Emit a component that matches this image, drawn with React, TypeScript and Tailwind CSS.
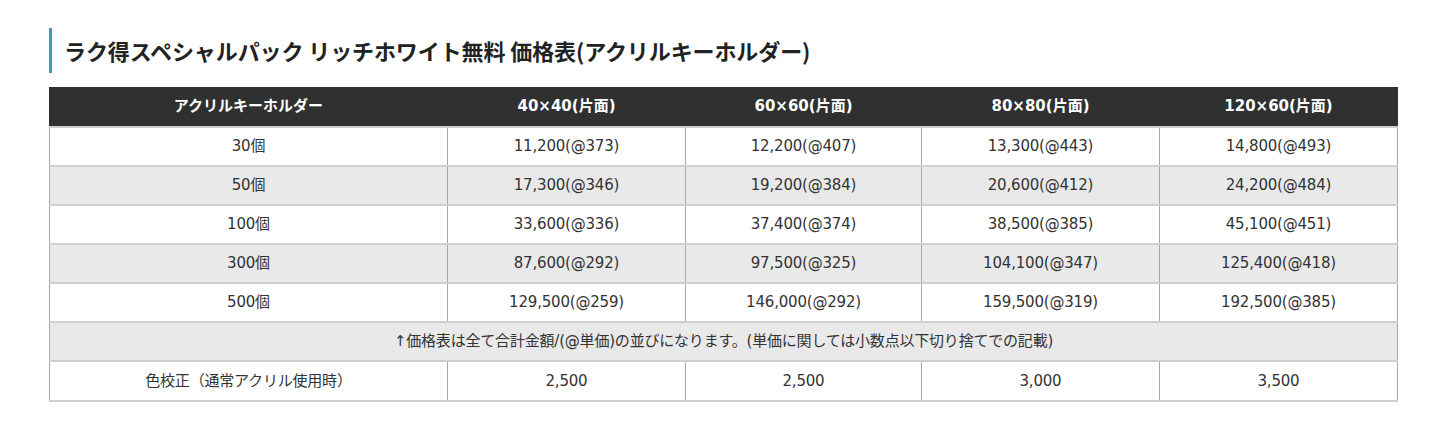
const headers = ['アクリルキーホルダー', '40×40(片面)', '60×60(片面)', '80×80(片面)', '120×60(片面)'];

const rows = [
  ['30個', '11,200(@373)', '12,200(@407)', '13,300(@443)', '14,800(@493)'],
  ['50個', '17,300(@346)', '19,200(@384)', '20,600(@412)', '24,200(@484)'],
  ['100個', '33,600(@336)', '37,400(@374)', '38,500(@385)', '45,100(@451)'],
  ['300個', '87,600(@292)', '97,500(@325)', '104,100(@347)', '125,400(@418)'],
  ['500個', '129,500(@259)', '146,000(@292)', '159,500(@319)', '192,500(@385)'],
];

const titleFont = { fontFamily: '"Noto Sans CJK JP", "Noto Sans", sans-serif' };
const bodyFont = { fontFamily: '"DejaVu Sans", "Noto Sans CJK JP", sans-serif' };

const cell = 'text-center border-x border-x-[#a8a8a8] border-y-2 border-y-[#cfcfcf] p-0 tracking-[-0.2px]';

export default function App() {
  return (
    <div className="bg-white w-[1446px] h-[429px] pt-[28px] pl-[49px]">
      <h2
        className="border-l-[3px] border-[#3a9bbf] pl-[12px] h-[45px] flex items-center text-[22px] font-bold text-[#222] tracking-[-0.1px]"
        style={titleFont}
      >
        ラク得スペシャルパック リッチホワイト無料 価格表(アクリルキーホルダー)
      </h2>
      <table
        className="mt-[14px] w-[1348px] border-collapse table-fixed text-[15px] text-[#333]"
        style={bodyFont}
      >
        <colgroup>
          <col className="w-[398px]" />
          <col className="w-[238px]" />
          <col className="w-[236px]" />
          <col className="w-[238px]" />
          <col className="w-[238px]" />
        </colgroup>
        <thead>
          <tr className="bg-[#2f3030] h-[40px]">
            {headers.map((h) => (
              <th key={h} className="text-white font-bold text-[15px] text-center border-x border-[#2f3030]">
                {h}
              </th>
            ))}
          </tr>
        </thead>
        <tbody>
          {rows.map((r, i) => (
            <tr key={r[0]} className={`h-[39px] ${i % 2 === 1 ? 'bg-[#e9e9e9]' : 'bg-white'}`}>
              {r.map((c, j) => (
                <td key={j} className={cell}>
                  {c}
                </td>
              ))}
            </tr>
          ))}
          <tr className="h-[39px] bg-[#e9e9e9]">
            <td colSpan={5} className={cell}>
              ↑価格表は全て合計金額/(@単価)の並びになります。(単価に関しては小数点以下切り捨てでの記載)
            </td>
          </tr>
          <tr className="h-[40px] bg-white">
            {['色校正（通常アクリル使用時）', '2,500', '2,500', '3,000', '3,500'].map((c, j) => (
              <td key={j} className={cell}>
                {c}
              </td>
            ))}
          </tr>
        </tbody>
      </table>
    </div>
  );
}
